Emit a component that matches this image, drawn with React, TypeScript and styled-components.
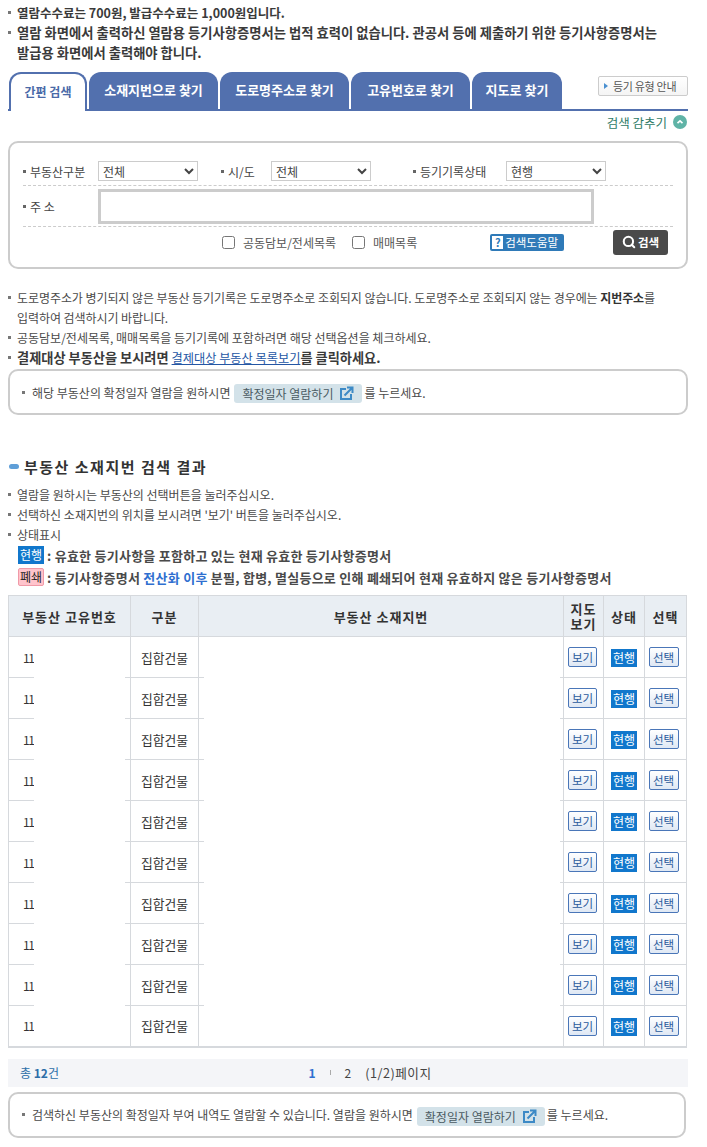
import { createGlobalStyle, styled } from 'styled-components';
import { Search } from 'lucide-react';

const GlobalStyle = createGlobalStyle`
  html, body {
    margin: 0;
    padding: 0;
    background: #fff;
  }
  body {
    font-family: "Noto Sans CJK KR", "Liberation Sans", sans-serif;
    font-size: 12px;
    color: #444;
  }
`;

const TABS = [
  { label: '간편 검색', width: 78 },
  { label: '소재지번으로 찾기', width: 129 },
  { label: '도로명주소로 찾기', width: 129 },
  { label: '고유번호로 찾기', width: 119 },
  { label: '지도로 찾기', width: 90 },
];

const ROWS = Array.from({ length: 10 }, (_, i) => i);

const Page = styled.div`
  width: 680px;
  padding: 3px 0 0 8px;
`;

const BulletList = styled.ul`
  list-style: none;
  margin: 0;
  padding: 0;
`;

const Bullet = styled.li<{ $bold?: number }>`
  display: flex;
  gap: 6px;
  line-height: 20px;
  font-size: ${(p) => p.$bold ?? 12}px;
  font-weight: ${(p) => (p.$bold ? 700 : 400)};
  color: ${(p) => (p.$bold ? '#3a3a3a' : '#4a4a4a')};

  &::before {
    content: '';
    flex: none;
    width: 3px;
    height: 3px;
    margin-top: 8px;
    background: #777;
  }
`;

const TightText = styled.span`
  letter-spacing: -0.07px;
`;

const Strong = styled.b`
  font-weight: 700;
  color: #333;
`;

const TabBar = styled.div`
  display: flex;
  align-items: flex-end;
  gap: 2px;
  height: 38px;
  margin-top: 8px;
  border-bottom: 2px solid #5270ae;
`;

const Tab = styled.div<{ $active?: boolean; $w: number }>`
  box-sizing: border-box;
  width: ${(p) => p.$w}px;
  height: ${(p) => (p.$active ? 39 : 37)}px;
  margin-left: ${(p) => (p.$active ? 1 : 0)}px;
  margin-bottom: ${(p) => (p.$active ? -2 : 0)}px;
  display: flex;
  align-items: center;
  justify-content: center;
  border-radius: 12px 12px 0 0;
  font-weight: 700;
  font-size: ${(p) => (p.$active ? 12 : 13)}px;
  background: ${(p) => (p.$active ? '#fff' : '#5270ae')};
  color: ${(p) => (p.$active ? '#4a6aa8' : '#fff')};
  border: ${(p) => (p.$active ? '2px solid #5270ae' : 'none')};
  border-bottom: none;
  padding-bottom: 2px;
`;

const GuideButton = styled.div`
  box-sizing: border-box;
  margin-left: auto;
  align-self: flex-start;
  margin-top: 5px;
  width: 90px;
  height: 20px;
  border: 1px solid #ccc;
  border-radius: 2px;
  display: flex;
  align-items: center;
  gap: 5px;
  padding-left: 5px;
  font-size: 11px;
  letter-spacing: -0.3px;
  color: #555;
  background: linear-gradient(#fff, #f4f4f4);

  &::before {
    content: '';
    border-left: 4px solid #4a90d0;
    border-top: 3px solid transparent;
    border-bottom: 3px solid transparent;
  }
`;

const HideRow = styled.div`
  display: flex;
  justify-content: flex-end;
  align-items: center;
  gap: 6px;
  height: 22px;
  font-size: 12.5px;
  color: #2d7a66;
  padding-right: 1px;
`;

const Panel = styled.div`
  box-sizing: border-box;
  width: 680px;
  height: 128px;
  margin-top: 8px;
  padding: 15px 13px 0;
  border: 2px solid #ccc;
  border-radius: 10px;
`;

const FieldRow = styled.div<{ $h: number; $line?: boolean }>`
  display: flex;
  align-items: center;
  height: ${(p) => p.$h}px;
  border-bottom: ${(p) => (p.$line ? '1px dashed #ccc' : 'none')};
`;

const Label = styled.span<{ $w: number; $ml?: number }>`
  width: ${(p) => p.$w}px;
  margin-left: ${(p) => p.$ml ?? 0}px;
  flex: none;
  display: flex;
  align-items: center;
  gap: 4px;
  color: #444;

  &::before {
    content: '';
    width: 3px;
    height: 3px;
    background: #666;
  }
`;

const Select = styled.select`
  box-sizing: border-box;
  width: 100px;
  height: 20px;
  margin-bottom: 2px;
  border: 1px solid #ccc;
  background: #fff;
  font: inherit;
  color: #444;
  padding: 0;
  flex: none;
`;

const AddressInput = styled.input`
  box-sizing: border-box;
  width: 496px;
  height: 35px;
  border: 3px solid #ccc;
  outline: none;
`;

const CheckLabel = styled.label<{ $ml: number }>`
  display: flex;
  align-items: center;
  gap: 8px;
  margin-left: ${(p) => p.$ml}px;
  color: #555;
`;

const Check = styled.input`
  width: 13px;
  height: 13px;
  margin: 0;
`;

const HelpButton = styled.div`
  display: flex;
  align-items: center;
  gap: 2px;
  margin-left: 73px;
  padding: 0 2px;
  width: 74px;
  box-sizing: border-box;
  height: 17px;
  border-radius: 2px;
  background: #2f7ab8;
  color: #fff;
  font-size: 11.5px;
`;

const HelpMark = styled.span`
  width: 11px;
  height: 13px;
  background: #fff;
  color: #2f7ab8;
  font-weight: 700;
  font-size: 11px;
  line-height: 13px;
  text-align: center;
`;

const SearchButton = styled.div`
  display: flex;
  align-items: center;
  justify-content: center;
  gap: 2px;
  width: 55px;
  height: 25px;
  margin-left: auto;
  margin-right: 5px;
  border-radius: 3px;
  background: #4a4a4a;
  color: #fff;
  font-size: 11.5px;
  font-weight: 700;
`;

const Notes = styled.div`
  margin-top: 19px;
`;

const NoticeBox = styled.div<{ $w?: number; $h: number; $mt?: number }>`
  box-sizing: border-box;
  width: ${(p) => p.$w ?? 680}px;
  height: ${(p) => p.$h}px;
  margin-top: ${(p) => p.$mt ?? 1}px;
  padding: 0 12px;
  display: flex;
  align-items: center;
  gap: 3px;
  border: 2px solid #ccc;
  border-radius: 10px;
  color: #4a4a4a;

  &::before {
    content: '';
    width: 3px;
    height: 3px;
    margin-right: 4px;
    background: #777;
  }
`;

const DatePill = styled.span`
  display: inline-flex;
  align-items: center;
  gap: 6px;
  height: 19px;
  padding: 0 8px;
  margin: 3px -1px 0 1px;
  border-radius: 3px;
  background: #d3e2e9;
  color: #4a5a62;
`;

const Link = styled.a`
  font-size: 12.2px;
  font-weight: 400;
  color: #2456a4;
  text-decoration: underline;
`;

const Heading = styled.h3`
  display: flex;
  align-items: center;
  gap: 5px;
  margin: 39px 0 0;
  height: 24px;
  font-size: 15px;
  font-weight: 700;
  letter-spacing: 1.5px;
  color: #333;

  &::before {
    content: '';
    width: 10px;
    height: 5px;
    margin-left: 1px;
    border-radius: 3px;
    background: #5f9fd8;
  }
`;

const ResultNotes = styled.div`
  margin-top: 7px;
`;

const Legend = styled.div`
  display: flex;
  align-items: center;
  gap: 3px;
  height: 22px;
  padding-left: 10px;
  font-size: 13px;
  letter-spacing: 0.25px;
  font-weight: 700;
  color: #4a4a4a;

  &:first-of-type {
    margin-top: -1px;
  }
`;

const Accent = styled.span`
  color: #2f6fd0;
`;

const LegendOk = styled.span`
  width: 26px;
  height: 18px;
  background: #1177cc;
  color: #fff;
  font-size: 12px;
  letter-spacing: 0;
  font-weight: 400;
  text-align: center;
  line-height: 18px;
`;

const LegendOff = styled(LegendOk)`
  box-sizing: border-box;
  background: #ffc4cc;
  border: 1px solid #f09aa8;
  border-radius: 2px;
  color: #222;
  line-height: 16px;
`;

const Table = styled.table`
  width: 678px;
  margin-top: 7px;
  table-layout: fixed;
  border-collapse: collapse;
  border-bottom: 2px solid #d6d9dd;
`;

const Th = styled.th<{ $w: number }>`
  box-sizing: border-box;
  width: ${(p) => p.$w}px;
  height: 41px;
  padding: 0;
  border: 1px solid #d6d9dd;
  background: #e9eef3;
  color: #333;
  font-size: 13px;
  letter-spacing: 1px;
  font-weight: 700;
  line-height: 15px;
`;

const Td = styled.td`
  box-sizing: border-box;
  position: relative;
  height: 41px;
  padding: 0;
  border: 1px solid #d6d9dd;
  text-align: center;
  color: #333;
`;

const TypeText = styled.span`
  font-size: 12.8px;
`;

/* blanked-out part of the cell, row lines inside it are hidden too */
const Blank = styled.span<{ $l: number; $r: number; $first: boolean; $last: boolean }>`
  position: absolute;
  left: ${(p) => p.$l}px;
  right: ${(p) => p.$r}px;
  top: ${(p) => (p.$first ? 0 : -1)}px;
  bottom: ${(p) => (p.$last ? 0 : -1)}px;
  background: #fff;
`;

const NumberText = styled.span`
  display: block;
  text-align: left;
  padding-left: 14px;
  letter-spacing: -1.5px;
`;

const RowButton = styled.span<{ $w: number; $shift: number }>`
  box-sizing: border-box;
  display: inline-block;
  width: ${(p) => p.$w}px;
  height: 20px;
  margin-right: ${(p) => p.$shift}px;
  line-height: 18px;
  font-size: 11.5px;
  border: 1px solid #4a76b8;
  border-radius: 2px;
  background: linear-gradient(#fff, #dfe8f4);
  color: #2a5a9c;
  vertical-align: middle;
`;

const StatusBadge = styled.span`
  display: inline-block;
  width: 26px;
  height: 18px;
  line-height: 18px;
  background: #1177cc;
  color: #fff;
  vertical-align: middle;
`;

const Pager = styled.div`
  position: relative;
  display: flex;
  align-items: center;
  justify-content: center;
  gap: 14px;
  height: 28px;
  margin-top: 11px;
  padding-left: 44px;
  background: #f4f5f8;
  color: #444;
`;

const Total = styled.span`
  position: absolute;
  left: 12px;
  color: #2d6ea8;

  b {
    font-weight: 700;
  }
`;

const PageCurrent = styled.b`
  color: #2f6fd0;
`;

const PageSep = styled.span`
  width: 1px;
  height: 5px;
  background: #aaa;
`;

const PageInfo = styled.span`
  font-size: 12.6px;
  letter-spacing: 0.5px;
`;

const LinkIcon = () => (
  <svg width="15" height="15" viewBox="0 0 15 15" fill="none" stroke="#3d8ac6" strokeWidth="2">
    <path d="M7 3H2v10h10V8" />
    <path d="M5.5 9.5 12.5 2.5M8 1.5h5.5V7" />
  </svg>
);

const App = () => {
  return (
    <Page>
      <GlobalStyle />
      <BulletList>
        <Bullet $bold={12.5}>
          <span>열람수수료는 700원, 발급수수료는 1,000원입니다.</span>
        </Bullet>
        <Bullet $bold={13.3}>
          <span>
            열람 화면에서 출력하신 열람용 등기사항증명서는 법적 효력이 없습니다. 관공서 등에 제출하기 위한 등기사항증명서는
            <br />
            발급용 화면에서 출력해야 합니다.
          </span>
        </Bullet>
      </BulletList>

      <TabBar>
        {TABS.map((tab, i) => (
          <Tab key={tab.label} $active={i === 0} $w={tab.width}>
            {tab.label}
          </Tab>
        ))}
        <GuideButton>등기 유형 안내</GuideButton>
      </TabBar>

      <HideRow>
        검색 감추기
        <svg width="14" height="14" viewBox="0 0 14 14">
          <circle cx="7" cy="7" r="7" fill="#5fb3a6" />
          <path d="M4.5 8.2 7 5.8l2.5 2.4" fill="none" stroke="#fff" strokeWidth="1.6" />
        </svg>
      </HideRow>

      <Panel>
        <FieldRow $h={27} $line>
          <Label $w={75}>부동산구분</Label>
          <Select defaultValue="전체">
            <option>전체</option>
          </Select>
          <Label $w={50} $ml={23}>시/도</Label>
          <Select defaultValue="전체">
            <option>전체</option>
          </Select>
          <Label $w={93} $ml={42}>등기기록상태</Label>
          <Select defaultValue="현행">
            <option>현행</option>
          </Select>
        </FieldRow>
        <FieldRow $h={40} $line>
          <Label $w={75}>주 소</Label>
          <AddressInput />
        </FieldRow>
        <FieldRow $h={30}>
          <CheckLabel $ml={199}>
            <Check type="checkbox" />
            공동담보/전세목록
          </CheckLabel>
          <CheckLabel $ml={16}>
            <Check type="checkbox" />
            매매목록
          </CheckLabel>
          <HelpButton>
            <HelpMark>?</HelpMark>
            검색도움말
          </HelpButton>
          <SearchButton>
            <Search size={14} color="#fff" strokeWidth={3.5} />
            검색
          </SearchButton>
        </FieldRow>
      </Panel>

      <Notes>
        <BulletList>
          <Bullet>
            <TightText>
              도로명주소가 병기되지 않은 부동산 등기기록은 도로명주소로 조회되지 않습니다. 도로명주소로 조회되지 않는 경우에는{' '}
              <Strong>지번주소</Strong>를
              <br />
              입력하여 검색하시기 바랍니다.
            </TightText>
          </Bullet>
          <Bullet>
            <span>공동담보/전세목록, 매매목록을 등기기록에 포함하려면 해당 선택옵션을 체크하세요.</span>
          </Bullet>
          <Bullet $bold={13.2}>
            <span>
              결제대상 부동산을 보시려면 <Link>결제대상 부동산 목록보기</Link>를 클릭하세요.
            </span>
          </Bullet>
        </BulletList>
      </Notes>

      <NoticeBox $h={46}>
        해당 부동산의 확정일자 열람을 원하시면
        <DatePill>
          확정일자 열람하기
          <LinkIcon />
        </DatePill>
        를 누르세요.
      </NoticeBox>

      <Heading>부동산 소재지번 검색 결과</Heading>

      <ResultNotes>
        <BulletList>
          <Bullet>
            <span>열람을 원하시는 부동산의 선택버튼을 눌러주십시오.</span>
          </Bullet>
          <Bullet>
            <span>선택하신 소재지번의 위치를 보시려면 '보기' 버튼을 눌러주십시오.</span>
          </Bullet>
          <Bullet>
            <span>상태표시</span>
          </Bullet>
        </BulletList>
        <Legend>
          <LegendOk>현행</LegendOk>
          <span>: 유효한 등기사항을 포함하고 있는 현재 유효한 등기사항증명서</span>
        </Legend>
        <Legend>
          <LegendOff>폐쇄</LegendOff>
          <span>
            : 등기사항증명서 <Accent>전산화 이후</Accent> 분필, 합병, 멸실등으로 인해 폐쇄되어 현재 유효하지 않은 등기사항증명서
          </span>
        </Legend>
      </ResultNotes>

      <Table>
        <thead>
          <tr>
            <Th $w={122}>부동산 고유번호</Th>
            <Th $w={68}>구분</Th>
            <Th $w={365}>부동산 소재지번</Th>
            <Th $w={40}>
              지도
              <br />
              보기
            </Th>
            <Th $w={41}>상태</Th>
            <Th $w={42}>선택</Th>
          </tr>
        </thead>
        <tbody>
          {ROWS.map((row) => (
            <tr key={row}>
              <Td>
                <NumberText>11</NumberText>
                <Blank $l={25} $r={5} $first={row === 0} $last={row === ROWS.length - 1} />
              </Td>
              <Td>
                <TypeText>집합건물</TypeText>
              </Td>
              <Td>
                <Blank $l={5} $r={3} $first={row === 0} $last={row === ROWS.length - 1} />
              </Td>
              <Td>
                <RowButton $w={29} $shift={2}>보기</RowButton>
              </Td>
              <Td>
                <StatusBadge>현행</StatusBadge>
              </Td>
              <Td>
                <RowButton $w={30} $shift={4}>선택</RowButton>
              </Td>
            </tr>
          ))}
        </tbody>
      </Table>

      <Pager>
        <Total>
          총 <b>12</b>건
        </Total>
        <PageCurrent>1</PageCurrent>
        <PageSep />
        <span>2</span>
        <PageInfo>(1/2)페이지</PageInfo>
      </Pager>

      <NoticeBox $w={678} $h={46} $mt={5}>
        검색하신 부동산의 확정일자 부여 내역도 열람할 수 있습니다. 열람을 원하시면
        <DatePill>
          확정일자 열람하기
          <LinkIcon />
        </DatePill>
        를 누르세요.
      </NoticeBox>
    </Page>
  );
};

export default App;
